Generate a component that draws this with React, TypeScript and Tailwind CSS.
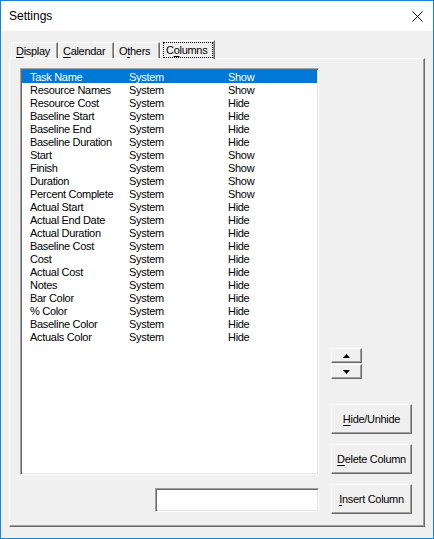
import React from "react";

const rows: [string, string, string][] = [
  ["Task Name", "System", "Show"],
  ["Resource Names", "System", "Show"],
  ["Resource Cost", "System", "Hide"],
  ["Baseline Start", "System", "Hide"],
  ["Baseline End", "System", "Hide"],
  ["Baseline Duration", "System", "Hide"],
  ["Start", "System", "Show"],
  ["Finish", "System", "Show"],
  ["Duration", "System", "Show"],
  ["Percent Complete", "System", "Show"],
  ["Actual Start", "System", "Hide"],
  ["Actual End Date", "System", "Hide"],
  ["Actual Duration", "System", "Hide"],
  ["Baseline Cost", "System", "Hide"],
  ["Cost", "System", "Hide"],
  ["Actual Cost", "System", "Hide"],
  ["Notes", "System", "Hide"],
  ["Bar Color", "System", "Hide"],
  ["% Color", "System", "Hide"],
  ["Baseline Color", "System", "Hide"],
  ["Actuals Color", "System", "Hide"],
];

function Tab({ w, pre, u, post }: { w: string; pre: string; u: string; post: string }) {
  return (
    <div
      className={`${w} h-[16px] border-t border-l border-white border-r border-r-[#696969] shadow-[inset_-1px_0_0_#a0a0a0] rounded-tl-[2px] flex items-center pl-[4px] pt-[1px] whitespace-nowrap`}
    >
      <span>
        {pre}
        <span className="underline underline-offset-[2px]">{u}</span>
        {post}
      </span>
    </div>
  );
}

function Btn({ children }: { children: React.ReactNode }) {
  return (
    <div className="w-[81px] h-[30px] bg-[#f0f0f0] border-t border-l border-white border-r border-b border-r-[#696969] border-b-[#696969] shadow-[inset_-1px_-1px_0_#a0a0a0] flex items-center justify-center pt-[1px] whitespace-nowrap">
      {children}
    </div>
  );
}

export default function App() {
  return (
    <div className="w-[434px] h-[539px] border border-[#1883d7] bg-[#f0f0f0] flex flex-col font-['Liberation_Sans',Arial,sans-serif] text-[11px] tracking-[-0.3px] text-black overflow-hidden">
      <div className="h-[30px] bg-white flex items-center justify-between pl-[8px] pr-[10px] shrink-0">
        <span className="text-[12px] tracking-normal">Settings</span>
        <svg width="11" height="11" viewBox="0 0 11 11">
          <path d="M0.5 0.5 L10.5 10.5 M10.5 0.5 L0.5 10.5" stroke="black" strokeWidth="1" />
        </svg>
      </div>

      <div className="pt-[9px] flex flex-col">
        <div className="ml-[10px] h-[18px] flex items-end">
          <Tab w="w-[47px]" pre="" u="D" post="isplay" />
          <Tab w="w-[56px]" pre="" u="C" post="alendar" />
          <Tab w="w-[46px]" pre="O" u="t" post="hers" />
          <div className="relative z-10 w-[55px] h-[19px] mb-[-1px] bg-[#f0f0f0] border-t border-l border-white border-r border-r-[#696969] shadow-[inset_-1px_0_0_#a0a0a0] rounded-tl-[2px] flex items-start pl-[2px] pt-[1px] whitespace-nowrap">
            <span className="h-[16px] w-[50px] border border-dotted border-black flex items-center pl-[2px]">
              <span>
                C<span className="underline underline-offset-[2px]">o</span>lumns
              </span>
            </span>
          </div>
        </div>

        <div className="ml-[8px] w-[416px] h-[469px] border-t border-l border-white border-r border-b border-r-[#696969] border-b-[#696969] shadow-[inset_-1px_-1px_0_#a0a0a0] flex pl-[10px] pt-[9px]">
          <div className="w-[299px] flex flex-col">
            <div className="h-[407px] bg-white border border-t-[#a0a0a0] border-l-[#a0a0a0] border-r-white border-b-white shadow-[inset_1px_1px_0_#696969,inset_-1px_-1px_0_#e3e3e3] p-[1px]">
              {rows.map((r, i) => (
                <div
                  key={i}
                  className={`h-[13px] leading-[14px] grid grid-cols-[99px_99px_1fr] pl-[8px] whitespace-nowrap ${
                    i === 0 ? "bg-[#0078d7] text-white" : ""
                  }`}
                >
                  <span>{r[0]}</span>
                  <span>{r[1]}</span>
                  <span>{r[2]}</span>
                </div>
              ))}
            </div>
            <div className="mt-[13px] self-end w-[164px] h-[24px] bg-white border border-t-[#a0a0a0] border-l-[#a0a0a0] border-r-white border-b-white shadow-[inset_1px_1px_0_#696969,inset_-1px_-1px_0_#e3e3e3]" />
          </div>

          <div className="ml-[12px] flex flex-col">
            <div className="mt-[280px] flex flex-col gap-[1px]">
              <div className="w-[31px] h-[15px] bg-[#f0f0f0] border-t border-l border-white border-r border-b border-r-[#696969] border-b-[#696969] shadow-[inset_-1px_-1px_0_#a0a0a0] flex items-center justify-center">
                <svg width="7" height="4" viewBox="0 0 7 4">
                  <polygon points="3.5,0 7,4 0,4" fill="black" />
                </svg>
              </div>
              <div className="w-[31px] h-[15px] bg-[#f0f0f0] border-t border-l border-white border-r border-b border-r-[#696969] border-b-[#696969] shadow-[inset_-1px_-1px_0_#a0a0a0] flex items-center justify-center">
                <svg width="7" height="4" viewBox="0 0 7 4">
                  <polygon points="0,0 7,0 3.5,4" fill="black" />
                </svg>
              </div>
            </div>
            <div className="mt-[25px] flex flex-col gap-[10px]">
              <Btn>
                <span>
                  <span className="underline underline-offset-[2px]">H</span>ide/Unhide
                </span>
              </Btn>
              <Btn>
                <span>
                  <span className="underline underline-offset-[2px]">D</span>elete Column
                </span>
              </Btn>
              <Btn>
                <span>
                  <span className="underline underline-offset-[2px]">I</span>nsert Column
                </span>
              </Btn>
            </div>
          </div>
        </div>
      </div>
    </div>
  );
}
